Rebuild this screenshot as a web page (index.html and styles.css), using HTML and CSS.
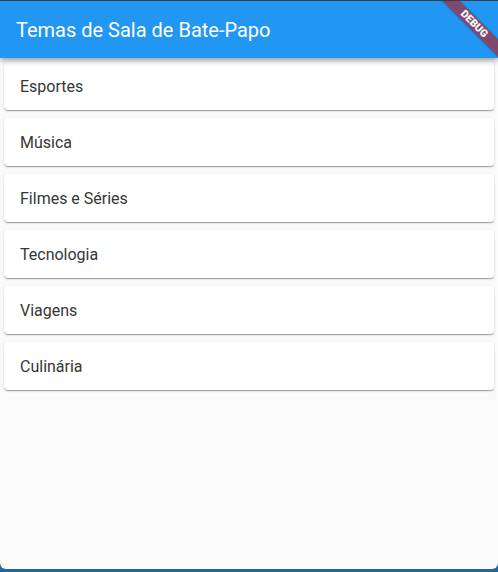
FILE: index.html
```html
<!DOCTYPE html>
<html lang="pt">
<head>
<meta charset="utf-8">
<title>Temas de Sala de Bate-Papo</title>
<link rel="stylesheet" href="styles.css">
</head>
<body>
<div class="window">
  <header class="appbar">
    <h1 class="title">Temas de Sala de Bate-Papo</h1>
  </header>
  <main class="list">
    <div class="card">Esportes</div>
    <div class="card">Música</div>
    <div class="card">Filmes e Séries</div>
    <div class="card">Tecnologia</div>
    <div class="card">Viagens</div>
    <div class="card">Culinária</div>
  </main>
  <div class="banner"><span>DEBUG</span></div>
</div>
</body>
</html>
```
FILE: styles.css
```css
* { box-sizing: border-box; }
html, body {
  margin: 0;
  padding: 0;
  height: 100%;
  background: #23669c;
  overflow: hidden;
}
body {
  font-family: Roboto, "Noto Sans", sans-serif;
}
.window {
  position: relative;
  height: 569px;
  background: #fafafa;
  border-top: 1px solid #3c3c3c;
  border-radius: 0 0 6px 6px;
  overflow: hidden;
  display: flex;
  flex-direction: column;
}
.appbar {
  height: 57px;
  background: #2196f3;
  display: flex;
  align-items: center;
  padding: 0 16px;
  box-shadow: 0 2px 4px -1px rgba(0,0,0,.2), 0 4px 5px 0 rgba(0,0,0,.14), 0 1px 10px 0 rgba(0,0,0,.12);
  position: relative;
  z-index: 1;
}
.title {
  margin: 0;
  font-size: 20px;
  font-weight: 400;
  color: #fff;
}
.list {
  display: flex;
  flex-direction: column;
  padding: 0 4px;
}
.card {
  margin: 4px 0;
  height: 48px;
  background: #fff;
  border-radius: 4px;
  display: flex;
  align-items: center;
  padding: 0 16px;
  font-size: 16px;
  color: #363636;
  box-shadow: 0 2px 1px -1px rgba(0,0,0,.2), 0 1px 1px 0 rgba(0,0,0,.14), 0 1px 3px 0 rgba(0,0,0,.12);
}
.banner {
  position: absolute;
  left: 434px;
  top: 17px;
  width: 80px;
  height: 12px;
  transform: rotate(45deg);
  background: rgba(183, 28, 28, 0.63);
  box-shadow: 0 0 2px rgba(0,0,0,.4);
  display: flex;
  align-items: center;
  justify-content: center;
  z-index: 2;
}
.banner span {
  color: #fff;
  font-size: 10.5px;
  font-weight: 900;
  line-height: 1;
}
```
